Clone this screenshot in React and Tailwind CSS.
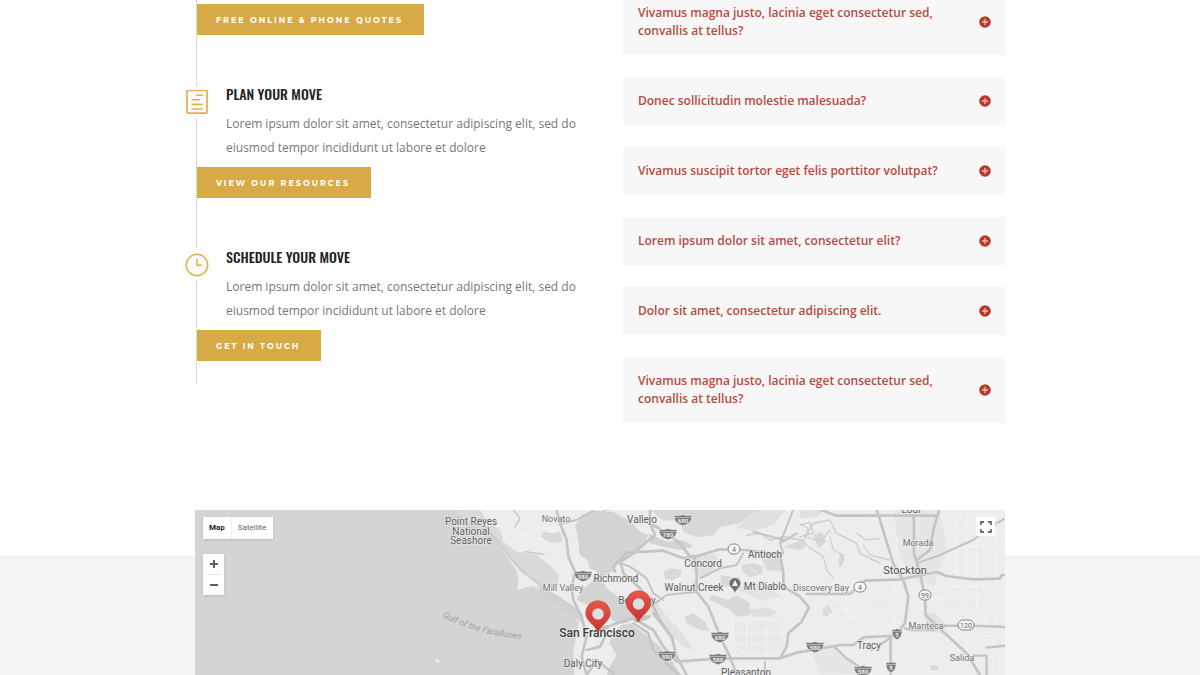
import React from "react";

const STEPS = [
  {
    title: "Plan Your Move",
    action: "View Our Resources",
    icon: "list",
  },
  {
    title: "Schedule Your Move",
    action: "Get In Touch",
    icon: "clock",
  },
];

const QUESTIONS = [
  "Vivamus magna justo, lacinia eget consectetur sed, convallis at tellus?",
  "Donec sollicitudin molestie malesuada?",
  "Vivamus suscipit tortor eget felis porttitor volutpat?",
  "Lorem ipsum dolor sit amet, consectetur elit?",
  "Dolor sit amet, consectetur adipiscing elit.",
  "Vivamus magna justo, lacinia eget consectetur sed, convallis at tellus?",
];

function ActionLink({ children }) {
  return (
    <a
      href="#"
      className="flex h-[31px] w-fit items-center bg-[#d8aa45] pl-[19px] pr-[21px] font-['Montserrat',Inter,sans-serif] text-[8px] font-bold uppercase tracking-[2px] text-white"
    >
      {children}
    </a>
  );
}

function StepIcon({ name }) {
  return (
    <svg viewBox="0 0 24 24" className="size-6" fill="none" stroke="#dfb04f" aria-hidden="true">
      {name === "list" ? (
        <>
          <rect x="2" y="0.5" width="20" height="22.6" rx="1" strokeWidth="1.7" />
          <path d="M11.300 5.200h6.500M6.500 9.800h8.500M6.500 14.400h11.300M6.500 19h11.300" strokeWidth="1.6" />
        </>
      ) : (
        <>
          <circle cx="12" cy="12" r="10.7" strokeWidth="1.5" />
          <path d="M12 6v6.3h5" strokeWidth="1.5" />
        </>
      )}
    </svg>
  );
}

function Step({ title, action, icon }) {
  return (
    <li className="relative">
      <span className="absolute -left-4 top-[1px] flex size-8 items-center justify-center rounded-full bg-[#fcfcfc]">
        <StepIcon name={icon} />
      </span>
      <div className="pl-[29px]">
        <h3 className="font-['Oswald','Liberation_Sans_Narrow',sans-serif] text-[14px] font-medium uppercase leading-[18px] text-[#222]">
          {title}
        </h3>
        <p className="mt-[9px] text-[12px] leading-6 text-[#777]">
          Lorem ipsum dolor sit amet, consectetur adipiscing elit, sed do eiusmod tempor incididunt ut labore et dolore
        </p>
      </div>
      <div className="mt-[7px]">
        <ActionLink>{action}</ActionLink>
      </div>
    </li>
  );
}

function Question({ children }) {
  return (
    <button
      type="button"
      aria-expanded="false"
      className="flex w-full items-center justify-between bg-[#f7f7f7] p-[15px] text-left text-[12px] font-semibold leading-[18px] text-[#b84a40]"
    >
      <span className="max-w-[310px]">{children}</span>
      <svg viewBox="0 0 12 12" className="size-3 shrink-0" aria-hidden="true">
        <circle cx="6" cy="6" r="5.8" fill="#b8382e" />
        <path d="M6 3v6M3 6h6" stroke="#f0bdb6" strokeWidth="1.3" />
      </svg>
    </button>
  );
}

const LABELS = [
  [471, 525, "Point Reyes", "s"],
  [471, 535, "National", "s"],
  [471, 544, "Seashore", "s"],
  [556, 522, "Novato", "xs"],
  [563, 591, "Mill Valley", "xs"],
  [616, 582, "Richmond", "s"],
  [637, 604, "Berkeley", "s"],
  [583, 667, "Daly City", "s"],
  [642, 523, "Vallejo", "s"],
  [703, 567, "Concord", "s"],
  [694, 591, "Walnut Creek", "s"],
  [765, 558, "Antioch", "s"],
  [765, 590, "Mt Diablo", "s"],
  [746, 676, "Pleasanton", "s"],
  [821, 591, "Discovery Bay", "xs"],
  [911, 513, "Lodi", "s"],
  [918, 546, "Morada", "xs"],
  [905, 574, "Stockton", "m"],
  [926, 629, "Manteca", "xs"],
  [869, 649, "Tracy", "s"],
  [962, 661, "Salida", "xs"],
];

const LABEL_CLASS = {
  xs: "fill-[#757575] text-[9px]",
  s: "fill-[#606060] text-[10px]",
  m: "fill-[#505050] text-[11px]",
};

const INTERSTATES = [
  [583, 576, "580"],
  [683, 520, "680"],
  [668, 534, "780"],
  [720, 637, "680"],
  [667, 656, "880"],
  [718, 659, "580"],
  [815, 647, "580"],
  [863, 671, "580"],
  [897, 634, "5"],
  [891, 667, "5"],
];

const ROUTES = [
  [734, 549, 6, "4"],
  [860, 587, 6, "4"],
  [925, 595, 6, "99"],
  [966, 625, 8, "120"],
];

function Interstate({ x, y, label }) {
  const w = label.length > 1 ? 9 : 5;
  return (
    <g transform={`translate(${x} ${y})`}>
      <path
        d={`M${-w} -5Q${-w / 2} -4 0 -5.5Q${w / 2} -4 ${w} -5Q${w + 1} 3 0 6Q${-w - 1} 3 ${-w} -5Z`}
        fill="#7d7d7d"
        stroke="#f2f2f2"
        strokeWidth="0.8"
      />
      <path d={`M${-w} -2.4H${w}`} stroke="#ddd" strokeWidth="0.6" />
      <text y="3.2" textAnchor="middle" className="fill-[#eee] text-[6px] font-bold">
        {label}
      </text>
    </g>
  );
}

function Pin({ x, y }) {
  return (
    <g transform={`translate(${x} ${y})`}>
      <ellipse cx="5" cy="-2" rx="9" ry="2.4" transform="rotate(-18)" fill="#555" fillOpacity="0.28" />
      <path
        d="M0 0C-3 -7 -12.3 -11 -12.3 -19A12.3 12.3 0 0 1 12.3 -19C12.3 -11 3 -7 0 0Z"
        fill="url(#pin)"
        stroke="#c04840"
        strokeWidth="0.6"
      />
      <circle cy="-18" r="5.8" fill="#dedede" />
    </g>
  );
}

function MapDrawing() {
  return (
    <svg
      viewBox="195 510 810 165"
      preserveAspectRatio="xMidYMin slice"
      className="block h-full w-full font-['Roboto',sans-serif]"
      role="img"
      aria-label="Map of the San Francisco Bay Area"
    >
      <defs>
        <linearGradient id="pin" x1="0" y1="0" x2="0" y2="1">
          <stop offset="0" stopColor="#e8564c" />
          <stop offset="1" stopColor="#c5352f" />
        </linearGradient>
      </defs>
      <g transform="translate(400 500) scale(0.3333)" strokeLinejoin="round" strokeLinecap="round">
        <rect x="-620" y="20" width="2460" height="520" fill="#ededed" />

        {/* inland valley tint and hills */}
        <path d="M1480 30L1620 30L1640 150L1600 260L1560 250L1500 170Z" fill="#e6e6e6" />
        <g fill="#d8d8d8">
          <path d="M750 28L1080 28L1020 70L960 80L940 105L890 112L850 95L840 60L790 62Z" />
          <path d="M1080 28L1160 28L1120 75L1060 92L1010 84L1050 50Z" fill="#e0e0e0" />
          <path d="M790 215L815 205L845 210L842 230L815 240L795 235Z" />
          <path d="M1025 195L1060 190L1090 200L1085 222L1050 232L1028 215Z" />
          <path d="M935 285L985 300L1010 285L1050 310L1050 345L1010 350L990 330L950 310L925 300Z" />
          <path d="M1045 330L1100 322L1130 335L1110 350L1060 350Z" fill="#dedede" />
          <path d="M855 350L880 340L915 365L930 395L900 390L860 370Z" />
          <path d="M730 270L760 290L800 350L850 400L880 450L850 440L800 390L745 330Z" fill="#e1e1e1" />
          <path d="M960 225L1020 235L1000 262L965 258Z" />
          <path d="M1080 165L1140 168L1150 215L1100 210Z" fill="#dadada" />
          <path d="M1000 265L1090 240L1140 290L1080 300Z" fill="#e3e3e3" />
          <path d="M1150 140L1210 120L1225 135L1200 150Z" />
          <path d="M1240 105L1265 95L1280 125L1255 145Z" />
          <path d="M1320 160L1335 175L1325 200L1315 190Z" />
          <path d="M1270 325L1285 315L1297 335L1280 350L1268 345Z" />
          <path d="M1060 430l16 -8l8 12l-14 10zM1590 495l24 2v14h-24z" />
        </g>
        <g fill="#e0e0e0">
          <path d="M870 170L960 160L940 215L900 235L880 210Z" />
          <path d="M1000 370L1140 365L1150 450L1010 460Z" fill="#e9e9e9" />
          <path d="M1200 30L1280 28L1250 50L1200 55Z" />
          <path d="M1570 345L1600 335L1640 375L1630 400L1590 395Z" />
          <path d="M1230 440L1290 430L1400 520L1260 525Z" fill="#e6e6e6" />
        </g>

        {/* field grid and local streets */}
        <g fill="none" stroke="#f5f5f5" strokeWidth="2.5">
          <path d="M1260 50L1380 130M1280 30L1420 90M1400 60H1460M1670 60V230M1700 40V330M1730 90V350M1760 60V370M1790 40V400M1650 100H1818M1660 140H1818M1640 260H1818M1620 300H1818M1610 340H1800" />
          <path d="M1250 300L1380 440M1300 290L1420 400M1340 240V340L1400 380M1400 260V350M1480 260V380M1380 300H1490M1360 340H1500M1640 420L1700 400L1780 410M1660 360V500M1700 380V510M1780 400V520M1500 430L1600 520" />
          <path d="M1000 360V440L1060 470M1040 360V460M1100 380V520M990 400H1150M1000 430H1120M880 200L900 240L880 270M820 120L850 180M700 100L760 130L780 190M930 130L960 180M1050 200L1120 270" />
          <path d="M300 60L380 110L450 120M350 50L420 90L480 80M400 150L470 200M530 440L620 470M540 490L620 500M560 400V525" />
        </g>

        {/* ocean */}
        <path
          d="M-620 20H200L240 62L285 115L320 165L350 212L355 240L352 270L378 262L400 258L440 285L500 320L536 368L528 410L520 460L524 540H-620Z"
          fill="#d4d4d4"
        />
        <path d="M105 476l10 3l4 9l-10 -3z" fill="#eee" />

        {/* Marin hills */}
        <path d="M170 30H240L262 62L300 90L310 125L350 155L410 165L450 195L478 225L470 262L410 250L360 215L300 130L255 85L190 55Z" fill="#d9d9d9" />
        <path d="M430 95L455 100L480 95L488 125L455 130L425 112Z" fill="#d8d8d8" />
        <path d="M255 80L290 120L340 185L400 240L470 290L520 320" fill="none" stroke="#cacaca" strokeWidth="5" />
        <path d="M410 255L480 290L535 330L545 370L500 330L430 290Z" fill="#d0d0d0" />
        <path d="M340 30L360 55L345 80M375 155L430 163" fill="none" stroke="#cccccc" strokeWidth="5" />

        {/* bays */}
        <g fill="#d3d3d3">
          <path d="M545 45L590 32L640 36L690 62L720 95L745 105L735 130L690 160L655 185L640 215L605 222L570 205L562 180L540 165L532 100L525 80Z" />
          <path d="M598 205L630 215L600 235L625 270L668 300L690 335L705 352L680 368L650 372L620 340L570 318L530 300L545 270L575 245Z" />
          <path d="M665 375L690 370L725 395L775 435L815 480L850 540H615L630 500L650 465L628 430L640 400Z" />
          <path d="M745 100L800 125L850 120L880 140L840 150L790 140L750 130Z" />
        </g>

        {/* river channels in the delta */}
        <g fill="none" stroke="#d0d0d0" strokeWidth="5">
          <path d="M1040 105L1080 100L1110 120L1150 110L1210 122L1240 70L1290 60L1310 100L1370 130L1380 160L1440 190" />
          <path d="M1200 72L1225 85L1215 110L1262 125L1290 90M1290 110L1300 150L1330 165L1320 200M1370 100L1400 120L1440 115M1225 140L1270 170L1280 210L1300 235M1390 135L1410 165L1470 180" strokeWidth="4" />
        </g>

        {/* highways */}
        <g fill="none" stroke="#c4c4c4" strokeWidth="8">
          <path d="M470 32L480 70L500 120L505 170L525 215L515 265L520 300L545 350L560 410L545 470L560 525" />
          <path d="M478 72L530 60L580 32M610 30L635 28" strokeWidth="6" />
          <path d="M560 450L600 440L620 400M560 525L590 480L640 520" />
          <path d="M750 28L750 70L765 105L700 160L662 185L670 220L720 265L760 320L780 360L815 410L830 470L860 525" />
          <path d="M645 215L640 200L680 158L790 152L850 175L880 168" />
          <path d="M650 185L690 200L740 235L760 280L790 300" strokeWidth="6" />
          <path d="M760 75L800 100L840 130L870 170L885 175L890 220L890 275L925 320L945 370L965 420L990 470L1010 525" />
          <path d="M885 170L960 148L1035 150L1140 165L1150 215L1150 260L1200 290L1227 322L1205 365L1165 400L1160 440L1140 475" />
          <path d="M900 235L960 205L1010 195L1030 160M765 310L800 285L890 275" strokeWidth="6" />
          <path d="M635 375L700 355L760 390L790 440L830 485L920 478L960 475L1140 475L1190 458L1240 450L1320 435L1360 435L1390 412L1470 408" />
          <path d="M700 370L745 400L760 450L810 500L840 525M760 340L820 420" strokeWidth="7" />
          <path d="M1180 28L1160 80L1140 130L1150 160M1140 130L1190 100M1060 95L1150 120M1095 525V485" strokeWidth="6" />
          <path d="M1260 28L1310 47H1610M1430 28L1480 190L1510 240L1525 290L1515 370L1490 400L1472 410V525" />
          <path d="M1542 45V160L1560 220L1575 290L1577 345L1640 405L1700 460L1740 525M1618 28L1600 90L1590 150L1550 180" />
          <path d="M1550 190L1620 165L1720 120L1770 80L1818 55" strokeWidth="6" />
          <path d="M1220 282H1350L1395 242L1500 238L1610 216L1640 228L1720 238L1800 236L1805 225H1818" />
          <path d="M1515 385L1530 390H1600L1630 377L1740 378L1818 381" strokeWidth="7" />
          <path d="M1305 442L1340 475L1400 515M1415 450L1470 415M1720 467H1760V525M1760 443L1818 437" strokeWidth="7" />
          <path d="M1200 75L1230 68L1240 100L1200 110" strokeWidth="3" />
        </g>
      </g>

      {INTERSTATES.map(([x, y, label], i) => (
        <Interstate key={i} x={x} y={y} label={label} />
      ))}
      {ROUTES.map(([x, y, r, label], i) => (
        <g key={i}>
          <rect x={x - r} y={y - 5} width={r * 2} height="10" rx="5" fill="#f5f5f5" stroke="#858585" strokeWidth="1" />
          <text x={x} y={y + 3} textAnchor="middle" className="fill-[#666] text-[7px]">
            {label}
          </text>
        </g>
      ))}

      <g stroke="#f0f0f0" strokeWidth="1.5" strokeOpacity="0.7" paintOrder="stroke">
        {LABELS.map(([x, y, label, size]) => (
          <text key={label} x={x} y={y} textAnchor="middle" className={LABEL_CLASS[size]}>
            {label}
          </text>
        ))}
        <text x="597" y="637" textAnchor="middle" className="fill-[#3c3c3c] text-[12px] font-medium">
          San Francisco
        </text>
      </g>

      <path id="gulf" d="M442 617Q478 636 530 640" fill="none" />
      <text className="fill-[#a2a2a2] text-[9px] italic">
        <textPath href="#gulf">Gulf of the Farallones</textPath>
      </text>

      <path d="M735 593C734 589 729.500 587 729.500 583.500A5.500 5.500 0 0 1 740.500 583.500C740.500 587 736 589 735 593Z" fill="#707070" />
      <path d="M732 586L735 580L738 586Z" fill="#f0f0f0" />

      <Pin x={598} y={632} />
      <Pin x={638.5} y={622} />
    </svg>
  );
}

function LocationMap() {
  return (
    <div className="relative h-[165px] overflow-hidden bg-[#d4d4d4] font-['Roboto',sans-serif]">
      <MapDrawing />
      <div className="absolute left-2 top-[7px] flex h-[22px] items-center bg-white text-[8px] shadow-sm">
        <button type="button" className="h-full border-r border-[#eee] pl-[6px] pr-[6px] font-bold text-[#222]">
          Map
        </button>
        <button type="button" className="h-full pl-[6px] pr-[7px] text-[#666]">
          Satellite
        </button>
      </div>
      <div className="absolute left-2 top-11 flex w-[21px] flex-col items-center bg-white shadow-sm">
        <button type="button" aria-label="Zoom in" className="flex h-5 w-full items-center justify-center">
          <svg viewBox="0 0 8 8" className="size-2" stroke="#606060" strokeWidth="2">
            <path d="M4 0v8M0 4h8" />
          </svg>
        </button>
        <span className="h-px w-[15px] bg-[#e8e8e8]" />
        <button type="button" aria-label="Zoom out" className="flex h-5 w-full items-center justify-center">
          <svg viewBox="0 0 8 8" className="size-2" stroke="#606060" strokeWidth="2">
            <path d="M0 4h8" />
          </svg>
        </button>
      </div>
      <button
        type="button"
        aria-label="Toggle fullscreen view"
        className="absolute right-[10px] top-[7px] flex size-[19px] items-center justify-center bg-white"
      >
        <svg viewBox="0 0 12 12" className="size-3" fill="none" stroke="#6b6b6b" strokeWidth="1.8">
          <path d="M1 4V1H4M8 1H11V4M11 8V11H8M4 11H1V8" />
        </svg>
      </button>
    </div>
  );
}

export default function App() {
  return (
    <div className="overflow-hidden bg-white font-['Open_Sans',sans-serif]">
      <section className="mx-auto grid max-w-[812px] grid-cols-2 items-start gap-[46px] pb-[132px]">
        <div className="ml-[2px] border-l border-dotted border-[#bdbdbd] pb-[23px] pt-1">
          <ActionLink>Free Online &amp; Phone Quotes</ActionLink>
          <ol className="mt-[50px] flex flex-col gap-[50px]">
            {STEPS.map((step) => (
              <Step key={step.title} {...step} />
            ))}
          </ol>
        </div>
        <div className="-mt-[11px] flex flex-col gap-[22px]">
          {QUESTIONS.map((question, i) => (
            <Question key={i}>{question}</Question>
          ))}
        </div>
      </section>
      <section className="flow-root bg-[#f4f4f4]">
        <div className="relative mx-auto -mt-[45px] max-w-[810px]">
          <LocationMap />
        </div>
      </section>
    </div>
  );
}
